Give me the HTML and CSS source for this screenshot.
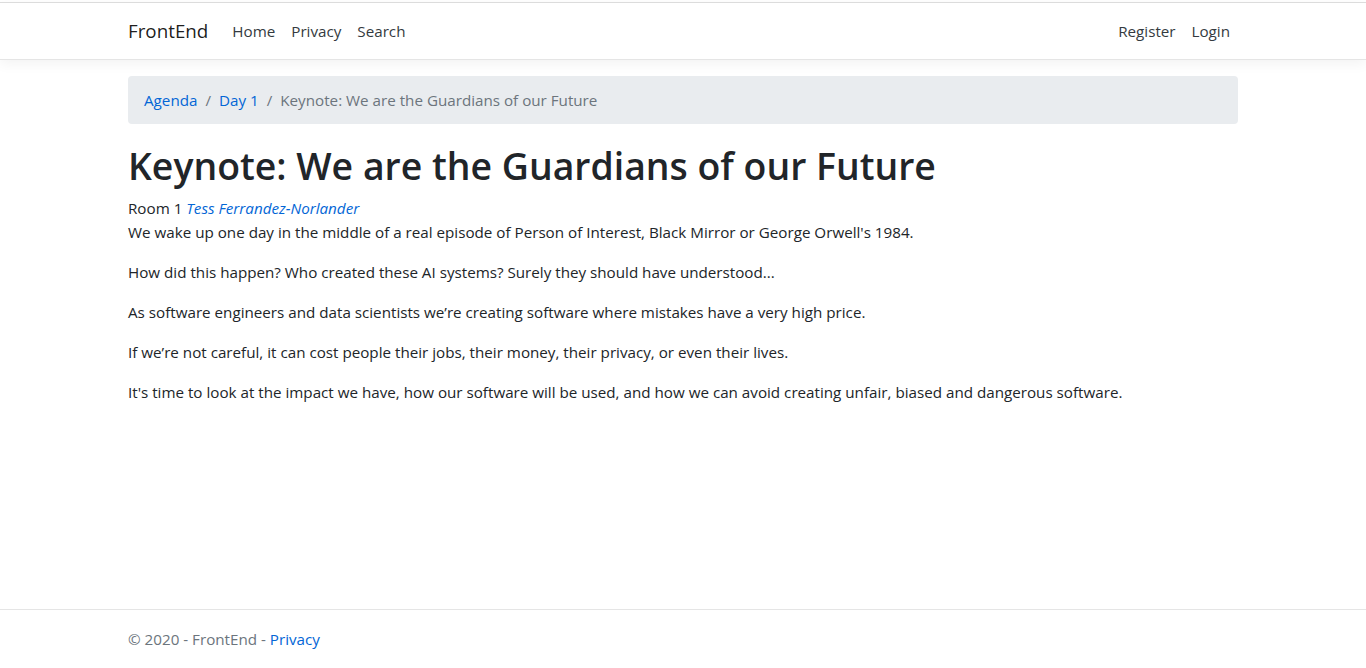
FILE: index.html
```html
<!DOCTYPE html>
<html lang="en">
<head>
<meta charset="utf-8">
<title>Keynote - FrontEnd</title>
<link rel="stylesheet" href="styles.css">
</head>
<body>
<div class="page">
  <header class="header">
    <nav class="navbar">
      <div class="container nav-inner">
        <a class="brand" href="#">FrontEnd</a>
        <ul class="nav">
          <li><a class="nav-link" href="#">Home</a></li>
          <li><a class="nav-link" href="#">Privacy</a></li>
          <li><a class="nav-link" href="#">Search</a></li>
        </ul>
        <ul class="nav nav-right">
          <li><a class="nav-link" href="#">Register</a></li>
          <li><a class="nav-link" href="#">Login</a></li>
        </ul>
      </div>
    </nav>
  </header>
  <main class="container main">
    <ol class="breadcrumb">
      <li class="crumb"><a href="#">Agenda</a></li>
      <li class="crumb"><a href="#">Day 1</a></li>
      <li class="crumb active">Keynote: We are the Guardians of our Future</li>
    </ol>
    <h1 class="title">Keynote: We are the Guardians of our Future</h1>
    <div class="meta">Room 1 <a href="#"><em>Tess Ferrandez-Norlander</em></a></div>
    <p>We wake up one day in the middle of a real episode of Person of Interest, Black Mirror or George Orwell's 1984.</p>
    <p>How did this happen? Who created these AI systems? Surely they should have understood...</p>
    <p>As software engineers and data scientists we’re creating software where mistakes have a very high price.</p>
    <p>If we’re not careful, it can cost people their jobs, their money, their privacy, or even their lives.</p>
    <p>It's time to look at the impact we have, how our software will be used, and how we can avoid creating unfair, biased and dangerous software.</p>
  </main>
  <footer class="footer">
    <div class="container">© 2020 - FrontEnd - <a href="#">Privacy</a></div>
  </footer>
</div>
</body>
</html>
```
FILE: styles.css
```css
* { box-sizing: border-box; }
html, body { margin: 0; padding: 0; }
body {
  font-family: "Open Sans", "Noto Sans", "Liberation Sans", sans-serif;
  font-size: 15.2px;
  line-height: 24px;
  color: #212529;
  background: #fff;
}
a { color: #0366d6; text-decoration: none; }
.page {
  min-height: 100vh;
  display: flex;
  flex-direction: column;
}
.container {
  width: 1140px;
  margin: 0 auto;
  padding: 0 15px;
}
.header {
  padding-top: 2px;
}
.navbar {
  border-top: 1px solid #dcdcdc;
  border-bottom: 1px solid #e5e5e5;
  box-shadow: 0 4px 12px rgba(0,0,0,.05);
  background: #fff;
  padding: 8px 0;
  margin-bottom: 16px;
}
.nav-inner {
  display: flex;
  align-items: center;
}
.brand {
  color: rgba(0,0,0,.9);
  font-size: 18.8px;
  line-height: 30px;
  padding: 5px 0;
  margin-right: 16px;
}
.nav {
  display: flex;
  list-style: none;
  margin: 0;
  padding: 0;
}
.nav-right { margin-left: auto; }
.nav-link {
  display: block;
  color: #343a40;
  padding: 8px;
  line-height: 24px;
}
.main { flex: 1; }
.breadcrumb {
  display: flex;
  list-style: none;
  margin: 0 0 16px;
  padding: 12px 16px;
  background: #e9ecef;
  border-radius: 4px;
}
.crumb + .crumb { padding-left: 8px; }
.crumb + .crumb::before {
  content: "/";
  color: #6c757d;
  padding-right: 8px;
}
.crumb.active { color: #6c757d; }
.title {
  font-size: 37.4px;
  font-weight: 600;
  line-height: 48px;
  padding-top: 2px;
  margin: 0 0 6px;
}
.meta { line-height: 24px; }
p { margin: 0 0 16px; }
.footer {
  border-top: 1px solid #e5e5e5;
  line-height: 57px;
  padding-top: 1px;
  color: #6c757d;
  white-space: nowrap;
}
```
